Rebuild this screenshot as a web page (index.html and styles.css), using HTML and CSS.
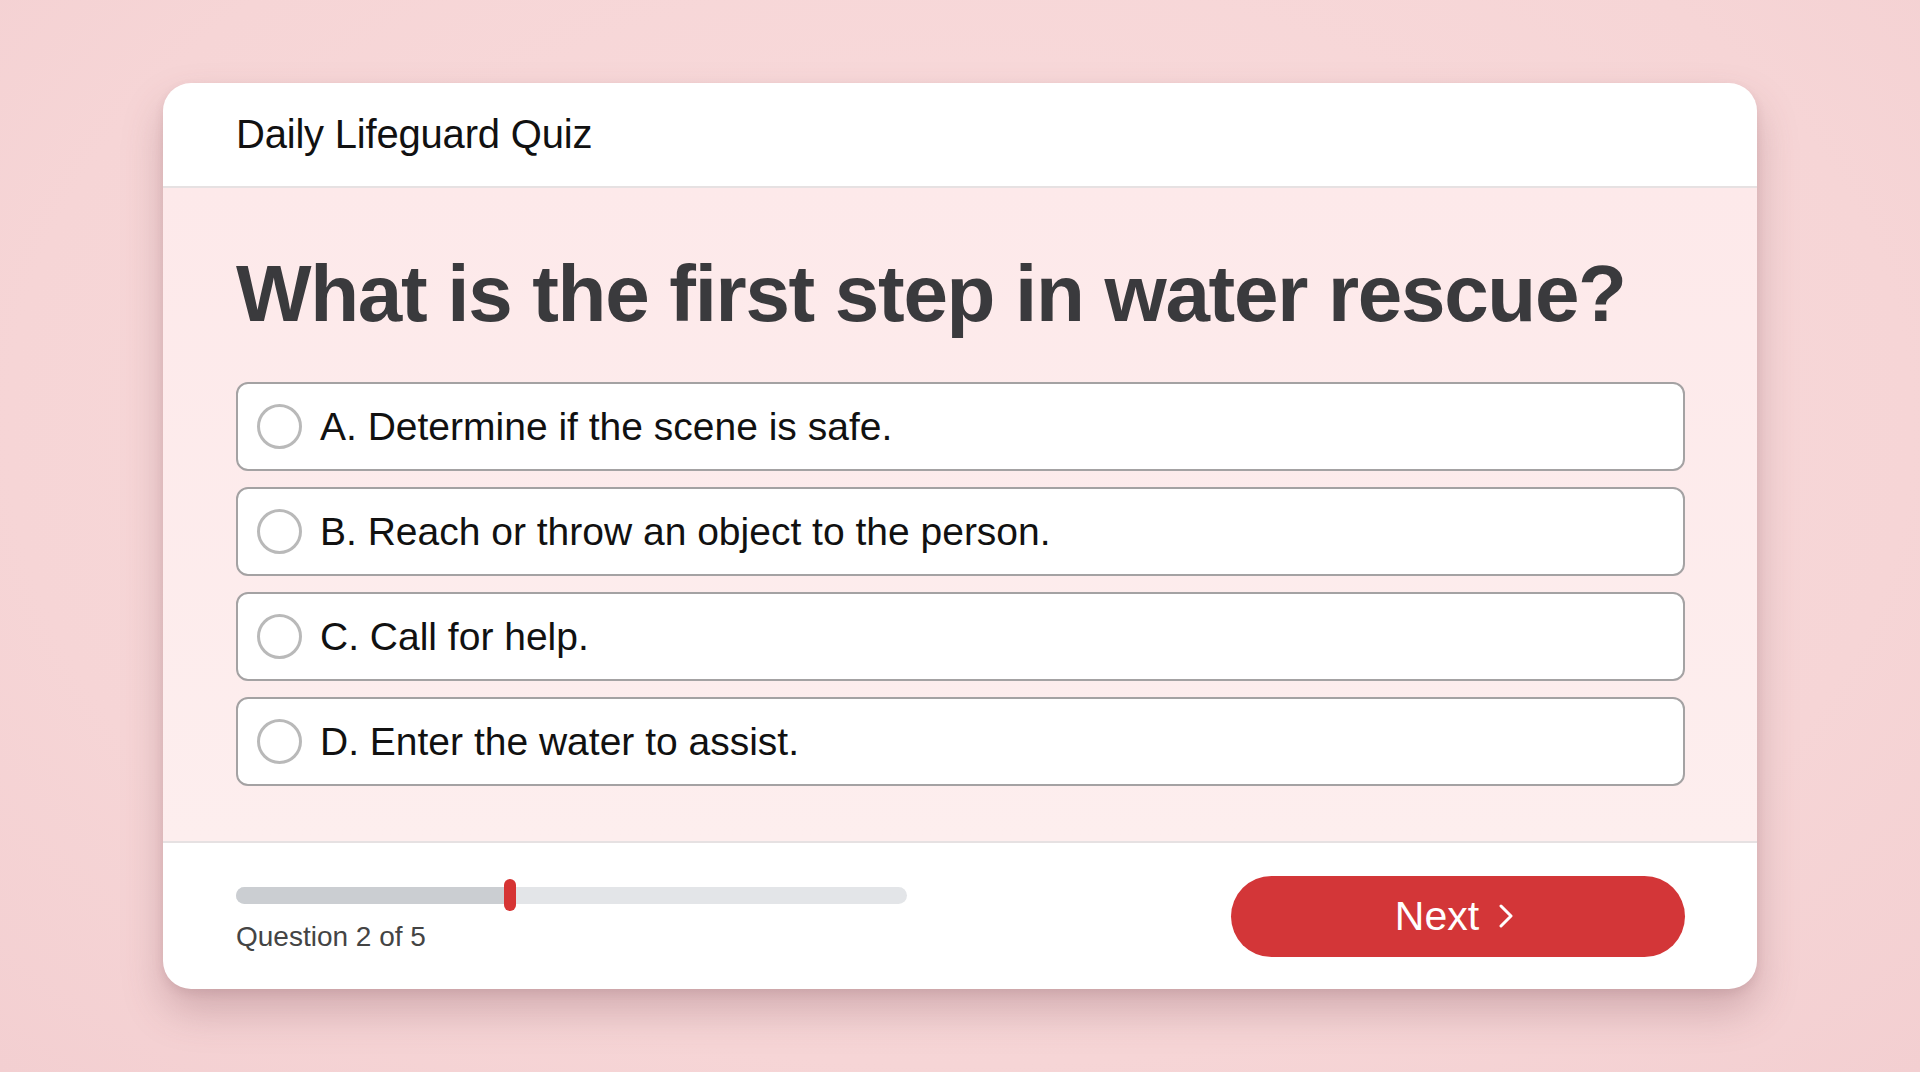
FILE: index.html
```html
<!DOCTYPE html>
<html lang="en">
<head>
    <meta charset="UTF-8">
    <meta name="viewport" content="width=device-width, initial-scale=1.0">
    <title>Daily Lifeguard Quiz</title>
    <link rel="stylesheet" href="styles.css">
</head>
<body>
    <div class="page">
        <div class="quiz-card">
            <header class="quiz-header">
                <h1 class="quiz-title">Daily Lifeguard Quiz</h1>
            </header>
            <main class="quiz-body">
                <h2 class="question">What is the first step in water rescue?</h2>
                <ul class="options">
                    <li class="option"><span class="radio"></span><span class="option-text">A. Determine if the scene is safe.</span></li>
                    <li class="option"><span class="radio"></span><span class="option-text">B. Reach or throw an object to the person.</span></li>
                    <li class="option"><span class="radio"></span><span class="option-text">C. Call for help.</span></li>
                    <li class="option"><span class="radio"></span><span class="option-text">D. Enter the water to assist.</span></li>
                </ul>
            </main>
            <footer class="quiz-footer">
                <div class="progress">
                    <div class="track-wrap">
                        <div class="track">
                            <div class="track-fill" style="width: 40.8%"></div>
                        </div>
                        <span class="thumb" style="left: 40.8%"></span>
                    </div>
                    <div class="progress-label">Question 2 of 5</div>
                </div>
                <button class="next-btn">
                    <span>Next</span>
                    <svg class="chevron" width="14" height="24" viewBox="0 0 14 24">
                        <path d="M2 2 L12 12 L2 22" fill="none" stroke="#fff" stroke-width="3" stroke-linecap="round" stroke-linejoin="round"/>
                    </svg>
                </button>
            </footer>
        </div>
    </div>
</body>
</html>
```

FILE: styles.css
```css
html, body {
   margin: 0;
   height: 100%;
}
body {
   font-family: "Liberation Sans", Arial, sans-serif;
   background: radial-gradient(ellipse at 50% 40%, #f9dcdd 0%, #f6d5d6 70%, #f3cfd1 100%);
   overflow: hidden;
}
.page {
   padding: 83px 163px 0 163px;
}
.quiz-card {
   background: #fff;
   border-radius: 28px;
   overflow: hidden;
   box-shadow: 0 22px 40px rgba(120, 70, 80, 0.28), 0 4px 10px rgba(120, 70, 80, 0.12);
}
.quiz-header {
   height: 103px;
   padding: 0 73px;
   display: flex;
   align-items: center;
   border-bottom: 2px solid #e6e1e2;
}
.quiz-title {
   margin: 0;
   font-size: 40px;
   font-weight: 400;
   color: #111;
   letter-spacing: -0.2px;
}
.quiz-body {
   background: linear-gradient(#fde9ea, #fdeeee);
   padding: 58px 72px 55px 73px;
   border-bottom: 2px solid #e6e1e2;
}
.question {
   margin: 0 0 40px 0;
   font-size: 80px;
   line-height: 96px;
   font-weight: 700;
   color: #3a3a3d;
   letter-spacing: -1.3px;
}
.options {
   list-style: none;
   margin: 0;
   padding: 0;
   display: flex;
   flex-direction: column;
   gap: 16px;
}
.option {
   height: 85px;
   background: #fff;
   border: 2px solid #a4a2a3;
   border-radius: 12px;
   display: flex;
   align-items: center;
   padding: 0 19px;
   gap: 18px;
}
.radio {
   width: 39px;
   height: 39px;
   border: 3px solid #b9b9b9;
   border-radius: 50%;
   flex: none;
}
.option-text {
   font-size: 39px;
   color: #111;
}
.quiz-footer {
   height: 146px;
   padding: 0 72px 0 73px;
   display: flex;
   align-items: center;
   justify-content: space-between;
}
.progress {
   width: 671px;
   display: flex;
   flex-direction: column;
   gap: 10px;
}
.track-wrap {
   position: relative;
   height: 32px;
   display: flex;
   align-items: center;
}
.track {
   width: 100%;
   height: 17px;
   background: #e3e5e8;
   border-radius: 9px;
   overflow: hidden;
}
.track-fill {
   height: 100%;
   background: #cbced2;
}
.thumb {
   position: absolute;
   top: 0;
   width: 12px;
   height: 32px;
   margin-left: -6px;
   background: #d63434;
   border-radius: 6px;
}
.progress-label {
   font-size: 28px;
   line-height: 32px;
   color: #444;
}
.next-btn {
   width: 454px;
   height: 81px;
   border: none;
   border-radius: 41px;
   background: #d33638;
   color: #fff;
   font-family: "Liberation Sans", Arial, sans-serif;
   font-size: 41px;
   display: flex;
   align-items: center;
   justify-content: center;
   gap: 20px;
   padding: 0 8px 0 0;
}
.chevron {
   display: block;
}
```
